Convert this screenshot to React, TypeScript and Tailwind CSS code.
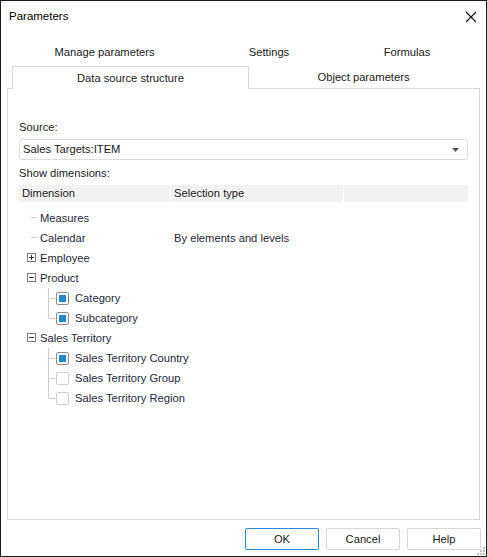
import React from 'react';

const font = { fontFamily: '"Liberation Sans", Arial, sans-serif' };

type Row =
  | { kind: 'leaf'; label: string; sel?: string }
  | { kind: 'group'; label: string; open: boolean }
  | { kind: 'child'; label: string; checked: boolean; last: boolean };

const rows: Row[] = [
  { kind: 'leaf', label: 'Measures' },
  { kind: 'leaf', label: 'Calendar', sel: 'By elements and levels' },
  { kind: 'group', label: 'Employee', open: false },
  { kind: 'group', label: 'Product', open: true },
  { kind: 'child', label: 'Category', checked: true, last: false },
  { kind: 'child', label: 'Subcategory', checked: true, last: true },
  { kind: 'group', label: 'Sales Territory', open: true },
  { kind: 'child', label: 'Sales Territory Country', checked: true, last: false },
  { kind: 'child', label: 'Sales Territory Group', checked: false, last: false },
  { kind: 'child', label: 'Sales Territory Region', checked: false, last: true },
];

function ExpandBox({ open }: { open: boolean }) {
  return (
    <svg width="9" height="9" viewBox="0 0 9 9" className="block">
      <rect x="0.5" y="0.5" width="8" height="8" fill="#fff" stroke="#7b7b7b" />
      <line x1="2" y1="4.5" x2="7" y2="4.5" stroke="#333" />
      {!open && <line x1="4.5" y1="2" x2="4.5" y2="7" stroke="#333" />}
    </svg>
  );
}

function Check({ checked }: { checked: boolean }) {
  return (
    <span
      className={
        'flex h-[13px] w-[13px] shrink-0 items-center justify-center rounded-[2px] border bg-white ' +
        (checked ? 'border-[#8c8c8c]' : 'border-[#cfcfcf]')
      }
    >
      {checked && <span className="block h-[7px] w-[7px] bg-[#1e88d2]" />}
    </span>
  );
}

function TreeRow({ row }: { row: Row }) {
  let lead: React.ReactNode;
  if (row.kind === 'leaf') {
    lead = (
      <div className="flex w-[21px] shrink-0 items-center pl-[12px]">
        <span className="block h-px w-[6px] bg-[#d0d0d0]" />
      </div>
    );
  } else if (row.kind === 'group') {
    lead = (
      <div className="flex w-[21px] shrink-0 items-center pl-[8px]">
        <ExpandBox open={row.open} />
      </div>
    );
  } else {
    lead = (
      <div className="flex w-[50px] shrink-0 items-center">
        <svg width="37" height="20" viewBox="0 0 37 20" className="block shrink-0">
          <line x1="29.5" y1="0" x2="29.5" y2={row.last ? 10.5 : 20} stroke="#cfcfcf" />
          <line x1="29.5" y1="10.5" x2="36" y2="10.5" stroke="#cfcfcf" />
        </svg>
        <Check checked={row.checked} />
      </div>
    );
  }
  return (
    <div className="flex h-[20px] items-center text-[11.2px] text-[#1e2838]">
      <div className="flex w-[155px] shrink-0 items-center">
        {lead}
        <span className={row.kind === 'child' ? 'ml-[6px] whitespace-nowrap' : 'whitespace-nowrap'}>
          {row.label}
        </span>
      </div>
      {row.kind === 'leaf' && row.sel && <span className="whitespace-nowrap">{row.sel}</span>}
    </div>
  );
}

export default function App() {
  return (
    <div
      style={font}
      className="relative flex h-[557px] w-[487px] flex-col border border-[#1b1b1b] bg-white text-[11.2px] text-[#1a1a1a]"
    >
      {/* title bar */}
      <div className="flex h-[30px] items-center justify-between pl-[8px] pr-[9px] pt-[1px]">
        <span className="text-[11.5px] text-black">Parameters</span>
        <svg width="12" height="12" viewBox="0 0 12 12">
          <path d="M1 1L11 11M11 1L1 11" stroke="#111" strokeWidth="1.1" />
        </svg>
      </div>

      {/* tabs */}
      <div className="mt-[11px] flex h-[20px] items-center pl-[11px]">
        <div className="w-[185px] text-center">Manage parameters</div>
        <div className="w-[144px] text-center">Settings</div>
        <div className="w-[132px] text-center">Formulas</div>
      </div>
      <div className="relative z-10 mt-[4px] flex h-[22px] pl-[11px]">
        <div className="flex h-[23px] w-[237px] items-center justify-center border-x border-t border-[#d9d9d9] bg-white">
          Data source structure
        </div>
        <div className="flex w-[229px] items-center justify-center">Object parameters</div>
      </div>

      {/* panel */}
      <div className="mx-[6px] flex h-[432px] flex-col border border-[#d9d9d9] px-[11px] pt-[29px]">
        <div className="flex h-[18px] items-center">Source:</div>
        <div className="mt-[3px] flex h-[21px] items-center justify-between rounded-[3px] border border-[#dcdcdc] pl-[3px] pr-[8px]">
          <span>Sales Targets:ITEM</span>
          <svg width="7" height="4" viewBox="0 0 7 4">
            <path d="M0 0H7L3.5 4Z" fill="#555" />
          </svg>
        </div>
        <div className="mt-[3px] flex h-[20px] items-center">Show dimensions:</div>
        <div className="mt-[2px] flex h-[17px] items-center gap-px">
          <div className="flex h-full w-[151px] items-center bg-[#f2f2f2] pl-[3px]">Dimension</div>
          <div className="flex h-full w-[172px] items-center bg-[#f2f2f2] pl-[3px]">Selection type</div>
          <div className="h-full flex-1 bg-[#f2f2f2]" />
        </div>
        <div className="mt-[6px] flex flex-col">
          {rows.map((r) => (
            <TreeRow key={r.label} row={r} />
          ))}
        </div>
      </div>

      {/* buttons */}
      <div className="mt-[8px] flex justify-end gap-[7px] pr-[5px]">
        <button className="h-[22px] w-[74px] rounded-[2px] border border-[#2b8ad6] bg-white text-[11.2px]">OK</button>
        <button className="h-[22px] w-[74px] rounded-[2px] border border-[#d6d6d6] bg-white text-[11.2px]">Cancel</button>
        <button className="h-[22px] w-[74px] rounded-[2px] border border-[#d6d6d6] bg-white text-[11.2px]">Help</button>
      </div>

      {/* resize grip */}
      <svg width="8" height="8" viewBox="0 0 8 8" className="absolute bottom-[1px] right-[1px]">
        <rect x="6" y="0" width="2" height="2" fill="#bdbdbd" />
        <rect x="3" y="3" width="2" height="2" fill="#bdbdbd" />
        <rect x="6" y="3" width="2" height="2" fill="#bdbdbd" />
        <rect x="0" y="6" width="2" height="2" fill="#bdbdbd" />
        <rect x="3" y="6" width="2" height="2" fill="#bdbdbd" />
        <rect x="6" y="6" width="2" height="2" fill="#bdbdbd" />
      </svg>
    </div>
  );
}
